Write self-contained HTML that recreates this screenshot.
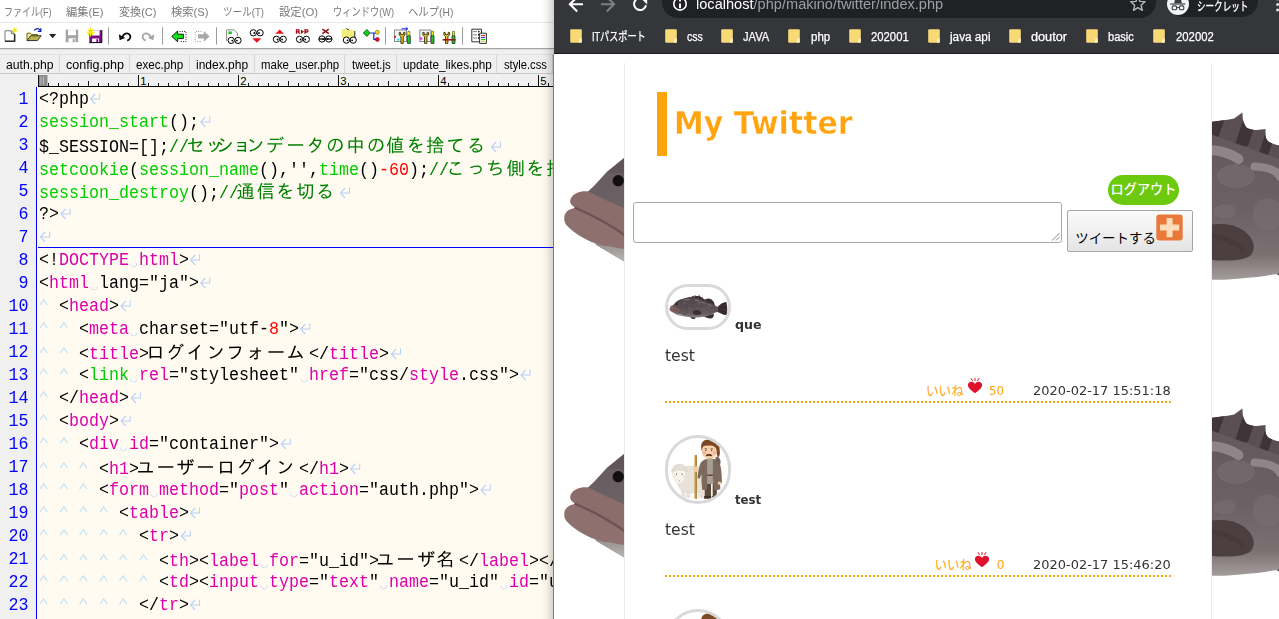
<!DOCTYPE html><html lang="ja"><head><meta charset="utf-8"><title>My Twitter</title><style>*{box-sizing:border-box}
html,body{margin:0;padding:0}
body{width:1279px;height:619px;overflow:hidden;position:relative;background:#fff;font-family:"Liberation Sans","Noto Sans CJK JP",sans-serif}
.abs{position:absolute}
/* ---------- editor ---------- */
#ed{position:absolute;left:0;top:0;width:554px;height:619px;overflow:hidden;background:#fffbf0}
#menu{position:absolute;left:0;top:0;width:554px;height:22px;background:#fff}
#menu span{position:absolute;top:4.1px;font-size:11.6px;line-height:16px;color:#7a7a7a;white-space:nowrap;font-family:"Liberation Sans","Noto Sans CJK JP",sans-serif;transform-origin:0 50%}
#tool{position:absolute;left:0;top:22px;width:554px;height:27px;background:#fff;border-top:1px solid #e6e6e6}
#toolb{position:absolute;left:0;top:48px;width:554px;height:2px;background:linear-gradient(#a4a4a4 0 50%,#dedede 50% 100%)}
#tabs{position:absolute;left:0;top:50px;width:554px;height:24px;background:#f0f0f0}
#tabs .t{position:absolute;top:4px;height:20px;border-right:1px solid #d6d6d6;border-top:1px solid #e2e2e2;border-bottom:1px solid #c9c9c9;background:#efefef}
#tabs span{position:absolute;top:7.3px;font-size:12px;line-height:16px;color:#000;white-space:nowrap;transform-origin:0 50%}
#ruler{position:absolute;left:0;top:74px;width:554px;height:13px;background:#f0f0f0}
#gut{position:absolute;left:0;top:87px;width:36px;height:532px;background:#f0f0f0}
#gutl{position:absolute;left:36px;top:87px;width:1px;height:532px;background:#0000ff}
.ln{position:absolute;left:0;width:30.8px;text-align:right;color:#0000ff;font:18px/23px "Liberation Mono",monospace;height:23px;transform:scaleX(.9257);transform-origin:0 0}
.cl{position:absolute;left:39px;height:23px;white-space:pre;font:18px/23px "Liberation Mono","IPAGothic",monospace;color:#000;transform:scaleX(.9257);transform-origin:0 0}
.cl i{font-style:normal}
.g{color:#00cc00}.c{color:#008000}.r{color:#ff0000}.m{color:#dd00aa}.k{color:#000}
.nl{color:#b4cdf5}
.tb{color:#c0d6f6}
.j{display:inline-block;font-family:"IPAGothic",monospace;font-size:18.5px;text-align:left;text-indent:-2.8px;letter-spacing:0;transform:scaleX(1.08);transform-origin:0 50%}
.nl{display:inline-block;width:12.96px;height:12px;vertical-align:-1px;margin-left:0.4px}
.sp{display:inline-block;width:10.8px;height:12px;vertical-align:-3px}
#shadow{position:absolute;left:541px;top:0;width:13px;height:619px;background:linear-gradient(90deg,rgba(0,0,0,0),rgba(0,0,0,.04) 40%,rgba(0,0,0,.18))}
#edge{position:absolute;left:553px;top:54px;width:1px;height:565px;background:#7d7d7d}
/* ---------- chrome ---------- */
#ch{position:absolute;left:554px;top:0;width:725px;height:619px;overflow:hidden;background:#fff}
#chtop{position:absolute;left:0;top:0;width:725px;height:54.6px;background:#35363a}
#chline{position:absolute;left:0;top:53.3px;width:725px;height:1.3px;background:#1c1d20}
#url{position:absolute;left:108px;top:-14.5px;width:494px;height:32px;border-radius:16px;background:#202124}
#incog{position:absolute;left:612.5px;top:-15px;width:91.5px;height:32px;border-radius:16px;background:#202124}
.bm{position:absolute;top:29px;font-size:12px;line-height:16px;color:#fff;-webkit-text-stroke:.25px #fff;white-space:nowrap;font-family:"Liberation Sans","Noto Sans CJK JP",sans-serif;transform-origin:0 50%}
.fd{position:absolute;top:29px;width:12px;height:14px}
#page{position:absolute;left:0;top:54px;width:725px;height:565px;overflow:hidden;background:#fff}
#cont{position:absolute;left:70px;top:9px;width:588px;height:600px;background:#fff;border-left:1px solid #ececec;border-right:1px solid #ececec}
.pf{font-family:"DejaVu Sans","Noto Sans CJK JP",sans-serif}
.av{border:3px solid #d9d9d9;border-radius:50px;overflow:hidden;background:#fff}
.nm{font-size:12px;line-height:16px;font-weight:bold;color:#333;white-space:nowrap;transform-origin:0 50%}
.tx{font-size:16px;line-height:22px;color:#333;white-space:nowrap;transform-origin:0 50%}
.lk{font-size:12.6px;line-height:18px;color:#ffa30f;white-space:nowrap;font-family:"Liberation Sans","Noto Sans CJK JP",sans-serif}
.ct{font-size:12.4px;line-height:18px;color:#ffa30f;white-space:nowrap;transform-origin:0 50%}
.dt{font-size:12.4px;line-height:18px;color:#333;white-space:nowrap;transform-origin:0 50%}
.dot{left:111px;width:506px;height:2px;background:repeating-linear-gradient(90deg,#ffa30f 0 2px,transparent 2px 4px)}
.tbs{display:inline-block;width:10.8px;height:12px;vertical-align:0.3px}
</style></head><body><svg width="0" height="0" style="position:absolute">
<defs>
<linearGradient id="kb" x1="0" y1="0" x2="0" y2="1">
<stop offset="0" stop-color="#62575a"/><stop offset=".55" stop-color="#6c6164"/><stop offset=".84" stop-color="#7b7173"/><stop offset="1" stop-color="#a59c9d"/>
</linearGradient>
<linearGradient id="kc" x1="0" y1="0" x2="0" y2="1">
<stop offset="0" stop-color="#968d8d"/><stop offset="1" stop-color="#cbc5c5"/>
</linearGradient>
<clipPath id="kfin"><path d="M178 74L190 63C190.5 70 193 72 197 71L205 57C205.5 64 207 67.5 208.3 67.8C216 67 224 66 230 64.6L238.5 58.6C238.5 64 239 67 239.8 68.6C241 72 242.5 74 243.8 74.3C247 76 250 76 252.7 75.9L261.6 75.1C261.3 79 261.4 81 261.6 82.3C262.5 86 264 87.5 265.6 88.3C269 90 272 91 275 91.2L284 90L290 116L178 80Z"/></clipPath>
<symbol id="kue" viewBox="0 0 450 296" preserveAspectRatio="none">
<!-- tail -->
<path d="M360 158C380 140 408 112 436 111C446 135 447 186 440 209C410 207 380 190 360 176Z" fill="#4a3e41"/>
<path d="M395 128L438 118M390 150L442 150M392 172L440 196" stroke="#392e31" stroke-width="5" fill="none"/>
<!-- soft dorsal -->
<path d="M281 93C296 78 326 84 341 108C347 118 350 128 351 137L288 116Z" fill="#4a3e41"/>
<!-- anal fin -->
<path d="M268 217C280 226 300 234 322 233C338 231 345 219 344 200L300 206Z" fill="#4a3e41"/>
<!-- pelvic fin -->
<path d="M166 218C168 230 180 238 200 237C206 232 206 226 204 220Z" fill="#453a3d"/>
<!-- spiny dorsal -->
<g clip-path="url(#kfin)">
<rect x="170" y="50" width="130" height="80" fill="#5a4f52"/>
<path d="M183 50L196 50L182 92L169 92Z M212 50L225.5 50L211.5 92L198 92Z M244.5 50L258 50L244 92L230.5 92Z M271 50L281 50L264 102L254 102Z" fill="#3f3439"/>
</g>
<!-- body -->
<path d="M34 137.5L40.4 131.4L52.5 118.3L70.3 103.7C84 96 96 92 107 89C125 82 150 74 182 72C192 74 200 78 208.3 80.7L275 105C290 110 320 120 347 131C356 138 366 146 376 150L376 185C366 186 358 188 350 190C338 198 310 211 277 219C262 222 252 223.5 241 224C230 225.5 218 226 208 225.7C195 226 180 225 168 223C150 221 135 219 120 216C100 213 85 210.5 70.3 207.6L42.4 191Z" fill="url(#kb)"/>
<!-- blotches -->
<g fill="#7c7274" opacity=".5">
<ellipse cx="232" cy="122" rx="19" ry="12"/><ellipse cx="264" cy="160" rx="15" ry="16"/><ellipse cx="221" cy="157" rx="11" ry="7"/>
<ellipse cx="130" cy="120" rx="20" ry="12"/><ellipse cx="300" cy="150" rx="18" ry="12"/><ellipse cx="160" cy="160" rx="14" ry="10"/>
</g>
<g fill="none" stroke="#8f8587" stroke-linecap="round" stroke-linejoin="round">
<path d="M206 96C216 96.5 226 99 234.5 105" stroke-width="10"/>
<path d="M250.5 112.5C260 113 268 115 272 118L277 124" stroke-width="8"/>
<path d="M120 98C135 94 150 92 160 94" stroke-width="8"/>
<path d="M300 128C312 130 322 136 330 142" stroke-width="7"/>
</g>
<!-- gill line -->
<path d="M128 96C146 120 148 170 126 205" fill="none" stroke="#584d50" stroke-width="4"/>
<!-- pectoral fin -->
<path d="M186 188C186 176 200 169.5 218 170C234 170.5 244 178 248 186C251 192 250 198 246 202C238 206.5 228 206.5 218 206.5C200 207 186 200 186 188Z" fill="#4b3f42"/>
<path d="M194 182C210 180 228 186 240 196" fill="none" stroke="#43373a" stroke-width="5" opacity=".7"/>
<!-- chin -->
<path d="M40.4 189C46 191 52 192 54.5 192L92 196C104 204 112 211 120 216C100 213 85 210.5 70.3 207.6L42.4 191Z" fill="url(#kc)"/>
<!-- head darker top -->
<path d="M52.5 118.3L70.3 103.7C84 96 96 92 107 89L100 120Z" fill="#5c5153" opacity=".55"/>
<!-- lips -->
<path d="M20.2 154.2C16 154.5 12 157 10.5 161.5C9.5 166 11 170 14.1 172.8C18 177 22 179.5 24.2 180.9C30 184.5 36 187.5 40.4 189C46 191 52 192 54.5 192C62 193.5 68 194.5 70.3 195C78 196.5 85 197 90 196C93 194 91 192.5 88 192C80 187.5 74 183 70.3 180.9C58 172 42 162.7 21.2 153.6Z" fill="#8e716f"/>
<path d="M34.3 137.5C27 136.5 20 139 17 144C15 148 16.5 151 21.2 153.6C40 162 58 172 70.3 180.9C78 186 84 190 88 192C93 185 93 172 88 165C78 158 60 149 52.5 146.5Z" fill="#8b6e6c"/>
<path d="M21.5 154C42 162.7 58 172 70.3 180.9C78 186 84 190 88 192" fill="none" stroke="#6b5354" stroke-width="2.4" stroke-linecap="round"/>
<!-- eye -->
<circle cx="64.2" cy="126.7" r="5.6" fill="#120f12"/>
</symbol>
<symbol id="shep" viewBox="0 0 60 64">
<!-- sheep legs -->
<path d="M13.6 52h3.2v8.4h-3.2zM18.6 53h3.2v7.4h-3.2zM30.6 53h3v7.4h-3zM33.9 52h2.6v8.2h-2.6z" fill="#ece6de" stroke="#d9cfc4" stroke-width=".5"/>
<!-- sheep body -->
<path d="M12 33C13 28.5 22 28 29 29.2C35 29.8 37.5 33 37.3 41C37.5 50 34 55.3 26 55.3C17 56 10.5 53 9.5 46Z" fill="#e9e2d9" stroke="#d9cfc4" stroke-width=".6"/>
<!-- sheep head -->
<path d="M4.6 33.4C4.8 30 8 29.2 11 29.6C14.5 29 17.6 30.4 17.8 33.6C18.3 36 17.6 38.4 16.8 40.4C15.8 44 14 46.4 11.2 46.4C8.4 46.4 6.6 44 5.8 40.4C4.8 38.4 4.2 36 4.6 33.4Z" fill="#f8f4ee" stroke="#ddd3c8" stroke-width=".5"/>
<path d="M4.8 32C2.6 32.2 2.4 34.6 4.6 35ZM17.6 32C19.9 32.2 20.1 34.6 17.9 35Z" fill="#efe6da" stroke="#d9cfc4" stroke-width=".5"/>
<path d="M4.6 33.6C4 29 7 26.4 11.2 26.8C15.5 26.2 18.6 29 17.8 33.8C15 31.8 8 31.8 4.6 33.6Z" fill="#e6ded4" stroke="#d5cabd" stroke-width=".5"/>
<circle cx="8.3" cy="36.6" r=".65" fill="#6a6058"/><circle cx="14" cy="36.6" r=".65" fill="#6a6058"/>
<ellipse cx="6.8" cy="39" rx="1.2" ry=".8" fill="#f6cfcf" opacity=".7"/><ellipse cx="15.6" cy="39" rx="1.2" ry=".8" fill="#f6cfcf" opacity=".7"/>
<path d="M10 42L11.2 43.3L12.4 42M11.2 43.3V44.4" fill="none" stroke="#bba99c" stroke-width=".6"/>
<!-- legs -->
<path d="M36.8 45H43.2V59.4H36.8ZM44.8 45H49V59.4H44.8Z" fill="#5c4a3b"/>
<path d="M36.2 58.6H43.4V61.2H36.2ZM44.4 58.6H49.6V61.2H44.4Z" fill="#3f3128"/>
<!-- coat -->
<path d="M39 21.2C35 22 32.6 24 31.6 28C30.6 32 29.8 36 29.6 40.4L31.4 41.4L33.6 36.6C33.4 42 33.6 48 34.4 52.2C36 52.8 37.6 52.6 38.8 52L39.6 44L45.4 44L46.2 52.6C48.6 53 51 52.6 52.6 51.6L52.2 46.6C53.4 46.2 54.2 45.4 54.2 44.2C54 36 53.4 29 51.8 25.4C50.4 22.6 48 21.4 45.6 21.2Z" fill="#7b6a5d"/>
<path d="M47.6 19.4C50 18.2 52.8 20.4 52.8 24L52.2 27.4L47.6 22.4Z" fill="#75645a"/>
<!-- tunic -->
<path d="M39.2 21.6H45V46.4H39.2Z" fill="#aa9e92"/>
<path d="M39.2 36.8H45V38.3H39.2Z" fill="#5a4b40"/>
<path d="M39.6 19.6H44.6V23H39.6Z" fill="#aa9e92"/>
<ellipse cx="51.7" cy="45.5" rx="1.9" ry="1.7" fill="#f6cba3"/>
<!-- head -->
<path d="M33.2 9.6C32.6 4.6 36 1.2 40.4 1.4C42 0.6 45.5 1 47.4 2.4C50.6 4 52.2 8 51.8 12C52.6 15 52 18.6 50 20.2C49.4 17.4 48.8 15.4 48.4 13.6L35.4 10.6L34.4 14.4C33.6 12.8 33.3 11.2 33.2 9.6Z" fill="#7a4a26"/>
<path d="M34.2 10.6C34.2 8 36.4 6.6 40.4 7C44.4 6.4 48.6 7.8 48.8 11.6L48.8 14.8C48.8 18.6 45.8 20.6 41.6 20.6C37.4 20.6 34.2 18.6 34.2 14.8Z" fill="#f8d1aa"/>
<path d="M33.8 11C34.6 8 37.6 7 40.6 7.8C43.6 7 47.6 8 49.2 12C49.6 8 47.6 5 41.6 5.2C36.4 5 33.6 7.4 33.8 11Z" fill="#7a4a26"/>
<ellipse cx="36.2" cy="15.1" rx="1.8" ry="1.4" fill="#f5a39c" opacity=".85"/><ellipse cx="46.8" cy="15.1" rx="1.8" ry="1.4" fill="#f5a39c" opacity=".85"/>
<path d="M36.6 10.9h2.6M42.6 10.9h2.6" stroke="#4a3424" stroke-width=".7" fill="none"/>
<circle cx="37.9" cy="12.5" r=".6" fill="#33261d"/><circle cx="43.8" cy="12.5" r=".6" fill="#33261d"/>
<path d="M37.8 17.4C39 15.8 43 15.8 44.4 17.4C44 18.9 42.2 18.6 41.1 18C40 18.6 38.2 18.9 37.8 17.4Z" fill="#5f3a1f"/>
<!-- staff + hand -->
<path d="M26.4 17.6Q27.7 16.4 29 17.6V61.4H26.4Z" fill="#c39a4d"/>
<path d="M28.4 17.4V61.4" stroke="#a67c33" stroke-width=".7" fill="none"/>
<path d="M25.2 31.2C25.2 29.2 27 28.4 28.6 28.6C30 28.8 30.6 30.4 30.4 32C30.2 33.6 29 34.6 27.6 34.4C26 34.2 25.2 32.8 25.2 31.2Z" fill="#f6cba3"/>
</symbol>
<symbol id="heart" viewBox="0 0 16 16">
<path d="M8 15.2C4.5 12.6 0.9 10.2 0.9 7.1C0.9 5 2.5 3.7 4.3 3.7C5.9 3.7 7.2 4.6 8 6C8.8 4.6 10.1 3.7 11.7 3.7C13.5 3.7 15.1 5 15.1 7.1C15.1 10.2 11.5 12.6 8 15.2Z" fill="#e0112b"/>
<path d="M8 0.2V2.6M4.2 0.6L5.4 2.7M11.8 0.6L10.6 2.7" stroke="#e0112b" stroke-width="1" stroke-linecap="round"/>
</symbol>
</defs>
</svg>
<div id="ed"><div id="menu"><span id="mn0" style="transform:scaleX(0.7763);left:4px">ファイル(F)</span><span id="mn1" style="transform:scaleX(0.9701);left:66px">編集(E)</span><span id="mn2" style="transform:scaleX(0.9543);left:119px">変換(C)</span><span id="mn3" style="transform:scaleX(0.9701);left:171px">検索(S)</span><span id="mn4" style="transform:scaleX(0.8267);left:223px">ツール(T)</span><span id="mn5" style="transform:scaleX(0.9765);left:278.5px">設定(O)</span><span id="mn6" style="transform:scaleX(0.7959);left:333px">ウィンドウ(W)</span><span id="mn7" style="transform:scaleX(0.8941);left:408px">ヘルプ(H)</span></div><div id="tool"><svg class="abs" style="left:0;top:0" width="554" height="26" viewBox="0 23 554 26" shape-rendering="auto">
<g fill="none" stroke-linecap="butt">
<!-- new -->
<path d="M5 30.8H11.3L14.3 33.8V41H5Z" fill="#fff" stroke="#777" stroke-width="1"/>
<path d="M11.3 30.8V33.8H14.3" stroke="#777" stroke-width="1"/>
<path d="M5 41.2H14.8V34" stroke="#000" stroke-width="1.1"/>
<path d="M14.8 27.6V33M12.2 30.3H17.4M13 28.5L16.6 32.1M16.6 28.5L13 32.1" stroke="#f2e600" stroke-width="1"/>
<!-- open -->
<path d="M27 40.5V33.2H30.5L31.5 34.5H37.5V36" fill="#f7f2a0" stroke="#6b6b00" stroke-width="1"/>
<path d="M27 40.6L30.6 35.8H41.2L37.4 40.6Z" fill="#b9b44a" stroke="#333" stroke-width="1"/>
<path d="M34.3 30.6C35.5 28 38.8 27.8 40 30.3M40.8 28.2V31.3H37.8" stroke="#0a1fb0" stroke-width="1.3"/>
<!-- dropdown -->
<path d="M49 34H56.2L52.6 38.2Z" fill="#222" stroke="none"/>
<!-- save gray -->
<path d="M65.7 29.6H78.2V42.2H65.7Z" fill="#a3a3a3" stroke="none"/>
<path d="M68 29.6H76V35.2H68Z M68.5 38.3H75.5V42.2H68.5Z" fill="#fff" stroke="none"/>
<path d="M72.7 39H74.6V42.2H72.7Z" fill="#a3a3a3" stroke="none"/>
<!-- save as purple -->
<path d="M89.3 30.2H101.8V42.4H89.3Z" fill="#7d0a82" stroke="none"/>
<path d="M91.6 30.2H99.6V35.4H91.6Z M92.1 38.5H99.1V42.4H92.1Z" fill="#fff" stroke="none"/>
<path d="M96.3 39.2H98.2V42.4H96.3Z" fill="#7d0a82" stroke="none"/>
<path d="M101.8 30.2V42.6H89.3" stroke="#000" stroke-width="1"/>
<path d="M90.5 27.8V36.5M86.3 32.2H95M87.6 29.2L93.6 35.2M93.6 29.2L87.6 35.2" stroke="#f5e800" stroke-width="1.1"/>
<!-- sep -->
<path d="M108.5 27.2V44.6M162.5 27.2V44.6M216.5 27.2V44.6M385.5 27.2V44.6M462.5 27.2V44.6" stroke="#9d9d9d" stroke-width="1"/>
<!-- undo -->
<path d="M122.5 37.2C123.2 33.6 127.5 32.2 129.6 34.6C131.3 36.6 130.2 39.6 127.2 40.6" stroke="#111" stroke-width="1.9"/>
<path d="M118.8 34.2L119.6 40.2L125.2 38Z" fill="#111" stroke="none"/>
<!-- redo -->
<path d="M150.5 37.2C149.8 33.6 145.5 32.2 143.4 34.6C141.7 36.6 142.8 39.6 145.8 40.6" stroke="#a6a6a6" stroke-width="1.9"/>
<path d="M154.2 34.2L153.4 40.2L147.8 38Z" fill="#a6a6a6" stroke="none"/>
<!-- jump back green -->
<path d="M179.5 31.5H186V41.5H179.5" stroke="#222" stroke-width="1" stroke-dasharray="1 1.3"/>
<path d="M171.8 36.4L177.6 31V34.2H183.4V38.6H177.6V41.8Z" fill="#0fe31a" stroke="#1a1a1a" stroke-width="1" stroke-linejoin="round"/>
<!-- jump fwd gray -->
<path d="M201.5 31.5H195.2V41.5H201.5" stroke="#9a9a9a" stroke-width="1" stroke-dasharray="1 1.3"/>
<path d="M209.6 36.4L203.8 31V34.2H198V38.6H203.8V41.8Z" fill="#a9a9a9" stroke="none"/>
<!-- eyes 1: doc+eyes -->
<path d="M226.6 41V29.8H234L237.4 33.2V36" fill="#fff" stroke="#8a8a8a" stroke-width="1"/>
<rect x="228.4" y="31.4" width="3.4" height="2.6" fill="#14c820" stroke="none"/>
<g id="eyes"><circle cx="231.2" cy="40.4" r="3.15" fill="#fff" stroke="#000" stroke-width="1"/><circle cx="238" cy="40.4" r="3.15" fill="#fff" stroke="#000" stroke-width="1"/><circle cx="232.3" cy="40.6" r=".9" fill="#000" stroke="none"/><circle cx="236.9" cy="40.6" r=".9" fill="#000" stroke="none"/></g>
<!-- eyes 2 -->
<use href="#eyes" x="22.1" y="-7.6"/>
<path d="M252.3 38.3H261.3L256.8 42.8Z" fill="#e6141e" stroke="none"/>
<!-- eyes 3 -->
<path d="M275.4 33.8H284L279.7 29.4Z" fill="#e6141e" stroke="none"/>
<use href="#eyes" x="45.2" y="-1.1"/>
<!-- eyes 4 RP -->
<path d="M296.5 33.8V29.8H298.6Q299.8 30.8 298.6 31.8H296.5M298.2 31.8L299.8 33.8 M305 33.8V29.8H307.2Q308.6 30.9 307.2 32H305" stroke="#a30f14" stroke-width="1.35"/>
<path d="M301 29.6V34L304 31.8Z" fill="#a30f14" stroke="none"/>
<use href="#eyes" x="68.3" y="-1.1"/>
<!-- eyes 5 X -->
<path d="M322.4 29.2L328.8 33.6M328.8 29.2L322.4 33.6" stroke="#8c0f12" stroke-width="1.5"/>
<use href="#eyes" x="90.8" y="-1.4"/>
<path d="M318.8 39H332.3" stroke="#000" stroke-width="1.2"/>
<!-- eyes 6 folder -->
<path d="M341.6 38V29.4L345 28.4L346.4 29.8H351.5L354.6 31V37" fill="#f3ee77" stroke="none"/>
<path d="M346.4 28.6L349 30M354.8 31V38" stroke="#222" stroke-width="1"/>
<use href="#eyes" x="115.2" y="-.3"/>
<!-- outline -->
<path d="M370.4 33H377M373.8 33V39.4H377" stroke="#1020f0" stroke-width="1.2"/>
<path d="M363.3 33L366.8 29.5L370.3 33L366.8 36.5Z" fill="#16c81e" stroke="#0a4d0c" stroke-width=".8"/>
<circle cx="377.3" cy="32.2" r="2" fill="#f2e21a" stroke="#6b6400" stroke-width=".6"/><circle cx="377.3" cy="39.4" r="2" fill="#e6141e" stroke="#6e0a0e" stroke-width=".6"/>
<!-- tools 1 -->
<rect x="394.5" y="30" width="12" height="11.5" fill="#f4f4f4" stroke="#8c8c8c" stroke-width="1"/>
<path d="M401.5 28.8H407.5M405.8 27.4L407.8 28.8L405.8 30.2" stroke="#1428e6" stroke-width="1"/>
<rect x="394.2" y="35.8" width="1.8" height="2" fill="#e6141e" stroke="none"/><rect x="397.2" y="38.6" width="2" height="2" fill="#19dcf0" stroke="none"/>
<g id="wr"><path d="M399.2 32.4V35L400.9 36.6V43.4H403.3V36.6L405 35V32.4H403.6V34.4H400.6V32.4Z" fill="#d6bc1e" stroke="#2a2400" stroke-width=".8"/><path d="M408 31.4H409.8V36H410.4V43.4H407.4V36H408Z" fill="#22c42a" stroke="#1a1a1a" stroke-width=".7"/><path d="M408 31.4H409.8V35H408Z" fill="#f0e61a" stroke="none"/></g>
<!-- tools 2 -->
<rect x="419.8" y="30" width="11" height="11.5" fill="#f4f4f4" stroke="#8c8c8c" stroke-width="1"/>
<rect x="420" y="37.4" width="2.2" height="2.2" fill="#f01ee0" stroke="none"/>
<use href="#wr" x="23.6" y="0"/>
<!-- tools 3 -->
<use href="#wr" x="44.6" y="0"/>
<path d="M442.6 39.8H455.6" stroke="#a01216" stroke-width="1.6"/>
<!-- list -->
<path d="M471.8 29.2H481.5V41.8H471.8Z" fill="#fff" stroke="#333" stroke-width="1"/>
<path d="M473.4 31.6H477M473.4 34.8H477M473.4 38H477" stroke="#333" stroke-width="1" stroke-dasharray="1.2 .8"/>
<path d="M478 30.4L480 31.6L478 32.8ZM478 33.6L480 34.8L478 36ZM478 36.8L480 38L478 39.2Z" fill="#222" stroke="none"/>
<path d="M479.6 33.2H486.4V43.4H479.6Z" fill="#fff" stroke="#333" stroke-width="1"/>
<path d="M481 35.6H485" stroke="#e6141e" stroke-width="1"/><path d="M481 37.6H485" stroke="#1428e6" stroke-width="1"/><path d="M481 39.6H485" stroke="#18b41e" stroke-width="1"/><path d="M481 41.4H485" stroke="#e0c81a" stroke-width="1"/>
</g>
</svg>
</div><div id="toolb"></div><div id="tabs"><div class="t" style="left:0px;width:60.0px"></div><div class="t" style="left:60px;width:70.1px"></div><div class="t" style="left:130px;width:59.900000000000006px"></div><div class="t" style="left:190px;width:64.9px"></div><div class="t" style="left:255px;width:90.10000000000002px"></div><div class="t" style="left:345px;width:51.5px"></div><div class="t" style="left:397px;width:100.19999999999999px"></div><div class="t" style="left:497px;width:56.0px"></div><span id="tb0" style="transform:scaleX(1.0167);left:6px">auth.php</span><span id="tb1" style="transform:scaleX(1.0471);left:65.7px">config.php</span><span id="tb2" style="transform:scaleX(0.9712);left:136.2px">exec.php</span><span id="tb3" style="transform:scaleX(1.0010);left:196.4px">index.php</span><span id="tb4" style="transform:scaleX(0.9529);left:260.5px">make_user.php</span><span id="tb5" style="transform:scaleX(0.9536);left:351.8px">tweet.js</span><span id="tb6" style="transform:scaleX(0.9796);left:403px">update_likes.php</span><span id="tb7" style="transform:scaleX(0.9323);left:503.7px">style.css</span></div><div id="ruler"><svg class="abs" style="left:0;top:0" width="554" height="13" viewBox="0 74 554 13"><rect x="38" y="75" width="9.5" height="11" fill="#8c8c8c"/><path d="M41 76.5v8M43.5 76.5v8" stroke="#b8b8c8" stroke-width="1"/><rect x="38" y="86" width="516" height="1" fill="#000"/><path d="M38.5 75V86M48.5 83V86M58.5 83V86M68.5 83V86M78.5 83V86M88.5 81V86M98.5 83V86M108.5 83V86M118.5 83V86M128.5 83V86M138.5 75V86M148.5 83V86M158.5 83V86M168.5 83V86M178.5 83V86M188.5 81V86M198.5 83V86M208.5 83V86M218.5 83V86M228.5 83V86M238.5 75V86M248.5 83V86M258.5 83V86M268.5 83V86M278.5 83V86M288.5 81V86M298.5 83V86M308.5 83V86M318.5 83V86M328.5 83V86M338.5 75V86M348.5 83V86M358.5 83V86M368.5 83V86M378.5 83V86M388.5 81V86M398.5 83V86M408.5 83V86M418.5 83V86M428.5 83V86M438.5 75V86M448.5 83V86M458.5 83V86M468.5 83V86M478.5 83V86M488.5 81V86M498.5 83V86M508.5 83V86M518.5 83V86M528.5 83V86M538.5 75V86M548.5 83V86M558.5 83V86" stroke="#111" stroke-width="1" fill="none"/><text x="140.2" y="84.6" font-family="Liberation Sans,sans-serif" font-size="11.3" fill="#000">1</text><text x="240.2" y="84.6" font-family="Liberation Sans,sans-serif" font-size="11.3" fill="#000">2</text><text x="340.2" y="84.6" font-family="Liberation Sans,sans-serif" font-size="11.3" fill="#000">3</text><text x="440.2" y="84.6" font-family="Liberation Sans,sans-serif" font-size="11.3" fill="#000">4</text><text x="540.2" y="84.6" font-family="Liberation Sans,sans-serif" font-size="11.3" fill="#000">5</text></svg></div><div id="gut"></div><div id="gutl"></div><div class="ln" style="top:88px">1</div><div class="cl" style="top:88px"><i class="k">&lt;?php</i><svg class="nl" viewBox="0 0 12 12"><path d="M11 0.5V6H1.2M6.2 1L1.2 6L6.2 11" fill="none" stroke="#b5d0fb" stroke-width="1.1"/></svg></div><div class="ln" style="top:111px">2</div><div class="cl" style="top:111px"><i class="g">session_start</i><i class="k">();</i><svg class="nl" viewBox="0 0 12 12"><path d="M11 0.5V6H1.2M6.2 1L1.2 6L6.2 11" fill="none" stroke="#b5d0fb" stroke-width="1.1"/></svg></div><div class="ln" style="top:134px">3</div><div class="cl" style="top:134px"><i class="k">$_SESSION=[];</i><i class="c">//<i class="j" style="width:21.61px">セ</i><i class="j" style="text-indent:-4.2px;width:10.80px">ッ</i><i class="j" style="width:21.61px">シ</i><i class="j" style="text-indent:-6.4px;width:10.80px">ョ</i><i class="j" style="width:21.61px">ン</i><i class="j" style="width:21.61px">デ</i><i class="j" style="width:21.61px">ー</i><i class="j" style="width:21.61px">タ</i><i class="j" style="width:21.61px">の</i><i class="j" style="width:21.61px">中</i><i class="j" style="width:21.61px">の</i><i class="j" style="width:21.61px">値</i><i class="j" style="width:21.61px">を</i><i class="j" style="width:21.61px">捨</i><i class="j" style="width:21.61px">て</i><i class="j" style="width:21.61px">る</i></i><svg class="nl" viewBox="0 0 12 12"><path d="M11 0.5V6H1.2M6.2 1L1.2 6L6.2 11" fill="none" stroke="#b5d0fb" stroke-width="1.1"/></svg></div><div class="ln" style="top:157px">4</div><div class="cl" style="top:157px"><i class="g">setcookie</i><i class="k">(</i><i class="g">session_name</i><i class="k">(),&#x27;&#x27;,</i><i class="g">time</i><i class="k">()</i><i class="r">-60</i><i class="k">);</i><i class="c">//<i class="j" style="width:21.61px">こ</i><i class="j" style="text-indent:-2.5px;width:21.61px">っ</i><i class="j" style="width:21.61px">ち</i><i class="j" style="width:21.61px">側</i><i class="j" style="width:21.61px">を</i><i class="j" style="width:21.61px">捨</i><i class="j" style="width:21.61px">て</i><i class="j" style="width:21.61px">る</i></i></div><div class="ln" style="top:180px">5</div><div class="cl" style="top:180px"><i class="g">session_destroy</i><i class="k">();</i><i class="c">//<i class="j" style="width:21.61px">通</i><i class="j" style="width:21.61px">信</i><i class="j" style="width:21.61px">を</i><i class="j" style="width:21.61px">切</i><i class="j" style="width:21.61px">る</i></i><svg class="nl" viewBox="0 0 12 12"><path d="M11 0.5V6H1.2M6.2 1L1.2 6L6.2 11" fill="none" stroke="#b5d0fb" stroke-width="1.1"/></svg></div><div class="ln" style="top:203px">6</div><div class="cl" style="top:203px"><i class="k">?&gt;</i><svg class="nl" viewBox="0 0 12 12"><path d="M11 0.5V6H1.2M6.2 1L1.2 6L6.2 11" fill="none" stroke="#b5d0fb" stroke-width="1.1"/></svg></div><div class="ln" style="top:226px">7</div><div class="cl" style="top:226px"><svg class="nl" viewBox="0 0 12 12"><path d="M11 0.5V6H1.2M6.2 1L1.2 6L6.2 11" fill="none" stroke="#b5d0fb" stroke-width="1.1"/></svg></div><div class="ln" style="top:249px">8</div><div class="cl" style="top:249px"><i class="k">&lt;!</i><i class="m">DOCTYPE</i><svg class="sp" viewBox="0 0 10.8 12"><path d="M2 7.5Q2 11 5.4 11Q8.8 11 8.8 7.5" fill="none" stroke="#cfe0f8" stroke-width="1"/></svg><i class="m">html</i><i class="k">&gt;</i><svg class="nl" viewBox="0 0 12 12"><path d="M11 0.5V6H1.2M6.2 1L1.2 6L6.2 11" fill="none" stroke="#b5d0fb" stroke-width="1.1"/></svg></div><div class="ln" style="top:272px">9</div><div class="cl" style="top:272px"><i class="k">&lt;</i><i class="m">html</i><i class="k"><svg class="sp" viewBox="0 0 10.8 12"><path d="M2 7.5Q2 11 5.4 11Q8.8 11 8.8 7.5" fill="none" stroke="#cfe0f8" stroke-width="1"/></svg>lang=&quot;ja&quot;&gt;</i><svg class="nl" viewBox="0 0 12 12"><path d="M11 0.5V6H1.2M6.2 1L1.2 6L6.2 11" fill="none" stroke="#b5d0fb" stroke-width="1.1"/></svg></div><div class="ln" style="top:295px">10</div><div class="cl" style="top:295px"><svg class="tbs" viewBox="0 0 10.8 12"><path d="M0.9 6.1L4.9 0.8L8.9 6.1" fill="none" stroke="#bfe2f5" stroke-width="1.15"/></svg> <i class="k">&lt;</i><i class="m">head</i><i class="k">&gt;</i><svg class="nl" viewBox="0 0 12 12"><path d="M11 0.5V6H1.2M6.2 1L1.2 6L6.2 11" fill="none" stroke="#b5d0fb" stroke-width="1.1"/></svg></div><div class="ln" style="top:318px">11</div><div class="cl" style="top:318px"><svg class="tbs" viewBox="0 0 10.8 12"><path d="M0.9 6.1L4.9 0.8L8.9 6.1" fill="none" stroke="#bfe2f5" stroke-width="1.15"/></svg> <svg class="tbs" viewBox="0 0 10.8 12"><path d="M0.9 6.1L4.9 0.8L8.9 6.1" fill="none" stroke="#bfe2f5" stroke-width="1.15"/></svg> <i class="k">&lt;</i><i class="m">meta</i><i class="k"><svg class="sp" viewBox="0 0 10.8 12"><path d="M2 7.5Q2 11 5.4 11Q8.8 11 8.8 7.5" fill="none" stroke="#cfe0f8" stroke-width="1"/></svg>charset=&quot;utf-</i><i class="r">8</i><i class="k">&quot;&gt;</i><svg class="nl" viewBox="0 0 12 12"><path d="M11 0.5V6H1.2M6.2 1L1.2 6L6.2 11" fill="none" stroke="#b5d0fb" stroke-width="1.1"/></svg></div><div class="ln" style="top:341px">12</div><div class="cl" style="top:341px"><svg class="tbs" viewBox="0 0 10.8 12"><path d="M0.9 6.1L4.9 0.8L8.9 6.1" fill="none" stroke="#bfe2f5" stroke-width="1.15"/></svg> <svg class="tbs" viewBox="0 0 10.8 12"><path d="M0.9 6.1L4.9 0.8L8.9 6.1" fill="none" stroke="#bfe2f5" stroke-width="1.15"/></svg> <i class="k">&lt;</i><i class="m">title</i><i class="k">&gt;</i><i class="k"><i class="j" style="width:21.61px">ロ</i><i class="j" style="width:21.61px">グ</i><i class="j" style="width:21.61px">イ</i><i class="j" style="width:21.61px">ン</i><i class="j" style="width:21.61px">フ</i><i class="j" style="width:21.61px">ォ</i><i class="j" style="width:21.61px">ー</i><i class="j" style="width:21.61px">ム</i></i><i class="k">&lt;/</i><i class="m">title</i><i class="k">&gt;</i><svg class="nl" viewBox="0 0 12 12"><path d="M11 0.5V6H1.2M6.2 1L1.2 6L6.2 11" fill="none" stroke="#b5d0fb" stroke-width="1.1"/></svg></div><div class="ln" style="top:364px">13</div><div class="cl" style="top:364px"><svg class="tbs" viewBox="0 0 10.8 12"><path d="M0.9 6.1L4.9 0.8L8.9 6.1" fill="none" stroke="#bfe2f5" stroke-width="1.15"/></svg> <svg class="tbs" viewBox="0 0 10.8 12"><path d="M0.9 6.1L4.9 0.8L8.9 6.1" fill="none" stroke="#bfe2f5" stroke-width="1.15"/></svg> <i class="k">&lt;</i><i class="g">link</i><svg class="sp" viewBox="0 0 10.8 12"><path d="M2 7.5Q2 11 5.4 11Q8.8 11 8.8 7.5" fill="none" stroke="#cfe0f8" stroke-width="1"/></svg><i class="m">rel</i><i class="k">=&quot;stylesheet&quot;<svg class="sp" viewBox="0 0 10.8 12"><path d="M2 7.5Q2 11 5.4 11Q8.8 11 8.8 7.5" fill="none" stroke="#cfe0f8" stroke-width="1"/></svg></i><i class="m">href</i><i class="k">=&quot;css/</i><i class="m">style</i><i class="k">.css&quot;&gt;</i><svg class="nl" viewBox="0 0 12 12"><path d="M11 0.5V6H1.2M6.2 1L1.2 6L6.2 11" fill="none" stroke="#b5d0fb" stroke-width="1.1"/></svg></div><div class="ln" style="top:387px">14</div><div class="cl" style="top:387px"><svg class="tbs" viewBox="0 0 10.8 12"><path d="M0.9 6.1L4.9 0.8L8.9 6.1" fill="none" stroke="#bfe2f5" stroke-width="1.15"/></svg> <i class="k">&lt;/</i><i class="m">head</i><i class="k">&gt;</i><svg class="nl" viewBox="0 0 12 12"><path d="M11 0.5V6H1.2M6.2 1L1.2 6L6.2 11" fill="none" stroke="#b5d0fb" stroke-width="1.1"/></svg></div><div class="ln" style="top:410px">15</div><div class="cl" style="top:410px"><svg class="tbs" viewBox="0 0 10.8 12"><path d="M0.9 6.1L4.9 0.8L8.9 6.1" fill="none" stroke="#bfe2f5" stroke-width="1.15"/></svg> <i class="k">&lt;</i><i class="m">body</i><i class="k">&gt;</i><svg class="nl" viewBox="0 0 12 12"><path d="M11 0.5V6H1.2M6.2 1L1.2 6L6.2 11" fill="none" stroke="#b5d0fb" stroke-width="1.1"/></svg></div><div class="ln" style="top:433px">16</div><div class="cl" style="top:433px"><svg class="tbs" viewBox="0 0 10.8 12"><path d="M0.9 6.1L4.9 0.8L8.9 6.1" fill="none" stroke="#bfe2f5" stroke-width="1.15"/></svg> <svg class="tbs" viewBox="0 0 10.8 12"><path d="M0.9 6.1L4.9 0.8L8.9 6.1" fill="none" stroke="#bfe2f5" stroke-width="1.15"/></svg> <i class="k">&lt;</i><i class="m">div</i><svg class="sp" viewBox="0 0 10.8 12"><path d="M2 7.5Q2 11 5.4 11Q8.8 11 8.8 7.5" fill="none" stroke="#cfe0f8" stroke-width="1"/></svg><i class="m">id</i><i class="k">=&quot;container&quot;&gt;</i><svg class="nl" viewBox="0 0 12 12"><path d="M11 0.5V6H1.2M6.2 1L1.2 6L6.2 11" fill="none" stroke="#b5d0fb" stroke-width="1.1"/></svg></div><div class="ln" style="top:456px">17</div><div class="cl" style="top:456px"><svg class="tbs" viewBox="0 0 10.8 12"><path d="M0.9 6.1L4.9 0.8L8.9 6.1" fill="none" stroke="#bfe2f5" stroke-width="1.15"/></svg> <svg class="tbs" viewBox="0 0 10.8 12"><path d="M0.9 6.1L4.9 0.8L8.9 6.1" fill="none" stroke="#bfe2f5" stroke-width="1.15"/></svg> <svg class="tbs" viewBox="0 0 10.8 12"><path d="M0.9 6.1L4.9 0.8L8.9 6.1" fill="none" stroke="#bfe2f5" stroke-width="1.15"/></svg> <i class="k">&lt;</i><i class="m">h1</i><i class="k">&gt;</i><i class="k"><i class="j" style="width:21.61px">ユ</i><i class="j" style="width:21.61px">ー</i><i class="j" style="width:21.61px">ザ</i><i class="j" style="width:21.61px">ー</i><i class="j" style="width:21.61px">ロ</i><i class="j" style="width:21.61px">グ</i><i class="j" style="width:21.61px">イ</i><i class="j" style="width:21.61px">ン</i></i><i class="k">&lt;/</i><i class="m">h1</i><i class="k">&gt;</i><svg class="nl" viewBox="0 0 12 12"><path d="M11 0.5V6H1.2M6.2 1L1.2 6L6.2 11" fill="none" stroke="#b5d0fb" stroke-width="1.1"/></svg></div><div class="ln" style="top:479px">18</div><div class="cl" style="top:479px"><svg class="tbs" viewBox="0 0 10.8 12"><path d="M0.9 6.1L4.9 0.8L8.9 6.1" fill="none" stroke="#bfe2f5" stroke-width="1.15"/></svg> <svg class="tbs" viewBox="0 0 10.8 12"><path d="M0.9 6.1L4.9 0.8L8.9 6.1" fill="none" stroke="#bfe2f5" stroke-width="1.15"/></svg> <svg class="tbs" viewBox="0 0 10.8 12"><path d="M0.9 6.1L4.9 0.8L8.9 6.1" fill="none" stroke="#bfe2f5" stroke-width="1.15"/></svg> <i class="k">&lt;</i><i class="m">form</i><svg class="sp" viewBox="0 0 10.8 12"><path d="M2 7.5Q2 11 5.4 11Q8.8 11 8.8 7.5" fill="none" stroke="#cfe0f8" stroke-width="1"/></svg><i class="m">method</i><i class="k">=&quot;</i><i class="m">post</i><i class="k">&quot;<svg class="sp" viewBox="0 0 10.8 12"><path d="M2 7.5Q2 11 5.4 11Q8.8 11 8.8 7.5" fill="none" stroke="#cfe0f8" stroke-width="1"/></svg></i><i class="m">action</i><i class="k">=&quot;auth.php&quot;&gt;</i><svg class="nl" viewBox="0 0 12 12"><path d="M11 0.5V6H1.2M6.2 1L1.2 6L6.2 11" fill="none" stroke="#b5d0fb" stroke-width="1.1"/></svg></div><div class="ln" style="top:502px">19</div><div class="cl" style="top:502px"><svg class="tbs" viewBox="0 0 10.8 12"><path d="M0.9 6.1L4.9 0.8L8.9 6.1" fill="none" stroke="#bfe2f5" stroke-width="1.15"/></svg> <svg class="tbs" viewBox="0 0 10.8 12"><path d="M0.9 6.1L4.9 0.8L8.9 6.1" fill="none" stroke="#bfe2f5" stroke-width="1.15"/></svg> <svg class="tbs" viewBox="0 0 10.8 12"><path d="M0.9 6.1L4.9 0.8L8.9 6.1" fill="none" stroke="#bfe2f5" stroke-width="1.15"/></svg> <svg class="tbs" viewBox="0 0 10.8 12"><path d="M0.9 6.1L4.9 0.8L8.9 6.1" fill="none" stroke="#bfe2f5" stroke-width="1.15"/></svg> <i class="k">&lt;</i><i class="m">table</i><i class="k">&gt;</i><svg class="nl" viewBox="0 0 12 12"><path d="M11 0.5V6H1.2M6.2 1L1.2 6L6.2 11" fill="none" stroke="#b5d0fb" stroke-width="1.1"/></svg></div><div class="ln" style="top:525px">20</div><div class="cl" style="top:525px"><svg class="tbs" viewBox="0 0 10.8 12"><path d="M0.9 6.1L4.9 0.8L8.9 6.1" fill="none" stroke="#bfe2f5" stroke-width="1.15"/></svg> <svg class="tbs" viewBox="0 0 10.8 12"><path d="M0.9 6.1L4.9 0.8L8.9 6.1" fill="none" stroke="#bfe2f5" stroke-width="1.15"/></svg> <svg class="tbs" viewBox="0 0 10.8 12"><path d="M0.9 6.1L4.9 0.8L8.9 6.1" fill="none" stroke="#bfe2f5" stroke-width="1.15"/></svg> <svg class="tbs" viewBox="0 0 10.8 12"><path d="M0.9 6.1L4.9 0.8L8.9 6.1" fill="none" stroke="#bfe2f5" stroke-width="1.15"/></svg> <svg class="tbs" viewBox="0 0 10.8 12"><path d="M0.9 6.1L4.9 0.8L8.9 6.1" fill="none" stroke="#bfe2f5" stroke-width="1.15"/></svg> <i class="k">&lt;</i><i class="m">tr</i><i class="k">&gt;</i><svg class="nl" viewBox="0 0 12 12"><path d="M11 0.5V6H1.2M6.2 1L1.2 6L6.2 11" fill="none" stroke="#b5d0fb" stroke-width="1.1"/></svg></div><div class="ln" style="top:548px">21</div><div class="cl" style="top:548px"><svg class="tbs" viewBox="0 0 10.8 12"><path d="M0.9 6.1L4.9 0.8L8.9 6.1" fill="none" stroke="#bfe2f5" stroke-width="1.15"/></svg> <svg class="tbs" viewBox="0 0 10.8 12"><path d="M0.9 6.1L4.9 0.8L8.9 6.1" fill="none" stroke="#bfe2f5" stroke-width="1.15"/></svg> <svg class="tbs" viewBox="0 0 10.8 12"><path d="M0.9 6.1L4.9 0.8L8.9 6.1" fill="none" stroke="#bfe2f5" stroke-width="1.15"/></svg> <svg class="tbs" viewBox="0 0 10.8 12"><path d="M0.9 6.1L4.9 0.8L8.9 6.1" fill="none" stroke="#bfe2f5" stroke-width="1.15"/></svg> <svg class="tbs" viewBox="0 0 10.8 12"><path d="M0.9 6.1L4.9 0.8L8.9 6.1" fill="none" stroke="#bfe2f5" stroke-width="1.15"/></svg> <svg class="tbs" viewBox="0 0 10.8 12"><path d="M0.9 6.1L4.9 0.8L8.9 6.1" fill="none" stroke="#bfe2f5" stroke-width="1.15"/></svg> <i class="k">&lt;</i><i class="m">th</i><i class="k">&gt;&lt;</i><i class="m">label</i><svg class="sp" viewBox="0 0 10.8 12"><path d="M2 7.5Q2 11 5.4 11Q8.8 11 8.8 7.5" fill="none" stroke="#cfe0f8" stroke-width="1"/></svg><i class="m">for</i><i class="k">=&quot;u_id&quot;&gt;</i><i class="k"><i class="j" style="width:21.61px">ユ</i><i class="j" style="width:21.61px">ー</i><i class="j" style="width:21.61px">ザ</i><i class="j" style="width:21.61px">名</i></i><i class="k">&lt;/</i><i class="m">label</i><i class="k">&gt;&lt;/</i><i class="m">th</i><i class="k">&gt;</i></div><div class="ln" style="top:571px">22</div><div class="cl" style="top:571px"><svg class="tbs" viewBox="0 0 10.8 12"><path d="M0.9 6.1L4.9 0.8L8.9 6.1" fill="none" stroke="#bfe2f5" stroke-width="1.15"/></svg> <svg class="tbs" viewBox="0 0 10.8 12"><path d="M0.9 6.1L4.9 0.8L8.9 6.1" fill="none" stroke="#bfe2f5" stroke-width="1.15"/></svg> <svg class="tbs" viewBox="0 0 10.8 12"><path d="M0.9 6.1L4.9 0.8L8.9 6.1" fill="none" stroke="#bfe2f5" stroke-width="1.15"/></svg> <svg class="tbs" viewBox="0 0 10.8 12"><path d="M0.9 6.1L4.9 0.8L8.9 6.1" fill="none" stroke="#bfe2f5" stroke-width="1.15"/></svg> <svg class="tbs" viewBox="0 0 10.8 12"><path d="M0.9 6.1L4.9 0.8L8.9 6.1" fill="none" stroke="#bfe2f5" stroke-width="1.15"/></svg> <svg class="tbs" viewBox="0 0 10.8 12"><path d="M0.9 6.1L4.9 0.8L8.9 6.1" fill="none" stroke="#bfe2f5" stroke-width="1.15"/></svg> <i class="k">&lt;</i><i class="m">td</i><i class="k">&gt;&lt;</i><i class="m">input</i><svg class="sp" viewBox="0 0 10.8 12"><path d="M2 7.5Q2 11 5.4 11Q8.8 11 8.8 7.5" fill="none" stroke="#cfe0f8" stroke-width="1"/></svg><i class="m">type</i><i class="k">=&quot;</i><i class="m">text</i><i class="k">&quot;<svg class="sp" viewBox="0 0 10.8 12"><path d="M2 7.5Q2 11 5.4 11Q8.8 11 8.8 7.5" fill="none" stroke="#cfe0f8" stroke-width="1"/></svg></i><i class="m">name</i><i class="k">=&quot;u_id&quot;<svg class="sp" viewBox="0 0 10.8 12"><path d="M2 7.5Q2 11 5.4 11Q8.8 11 8.8 7.5" fill="none" stroke="#cfe0f8" stroke-width="1"/></svg></i><i class="m">id</i><i class="k">=&quot;u_id&quot;&gt;&lt;/</i><i class="m">td</i><i class="k">&gt;</i></div><div class="ln" style="top:594px">23</div><div class="cl" style="top:594px"><svg class="tbs" viewBox="0 0 10.8 12"><path d="M0.9 6.1L4.9 0.8L8.9 6.1" fill="none" stroke="#bfe2f5" stroke-width="1.15"/></svg> <svg class="tbs" viewBox="0 0 10.8 12"><path d="M0.9 6.1L4.9 0.8L8.9 6.1" fill="none" stroke="#bfe2f5" stroke-width="1.15"/></svg> <svg class="tbs" viewBox="0 0 10.8 12"><path d="M0.9 6.1L4.9 0.8L8.9 6.1" fill="none" stroke="#bfe2f5" stroke-width="1.15"/></svg> <svg class="tbs" viewBox="0 0 10.8 12"><path d="M0.9 6.1L4.9 0.8L8.9 6.1" fill="none" stroke="#bfe2f5" stroke-width="1.15"/></svg> <svg class="tbs" viewBox="0 0 10.8 12"><path d="M0.9 6.1L4.9 0.8L8.9 6.1" fill="none" stroke="#bfe2f5" stroke-width="1.15"/></svg> <i class="k">&lt;/</i><i class="m">tr</i><i class="k">&gt;</i><svg class="nl" viewBox="0 0 12 12"><path d="M11 0.5V6H1.2M6.2 1L1.2 6L6.2 11" fill="none" stroke="#b5d0fb" stroke-width="1.1"/></svg></div><div class="ln" style="top:617px">24</div><div class="cl" style="top:617px"><svg class="tbs" viewBox="0 0 10.8 12"><path d="M0.9 6.1L4.9 0.8L8.9 6.1" fill="none" stroke="#bfe2f5" stroke-width="1.15"/></svg> <svg class="tbs" viewBox="0 0 10.8 12"><path d="M0.9 6.1L4.9 0.8L8.9 6.1" fill="none" stroke="#bfe2f5" stroke-width="1.15"/></svg> <svg class="tbs" viewBox="0 0 10.8 12"><path d="M0.9 6.1L4.9 0.8L8.9 6.1" fill="none" stroke="#bfe2f5" stroke-width="1.15"/></svg> <svg class="tbs" viewBox="0 0 10.8 12"><path d="M0.9 6.1L4.9 0.8L8.9 6.1" fill="none" stroke="#bfe2f5" stroke-width="1.15"/></svg> <svg class="tbs" viewBox="0 0 10.8 12"><path d="M0.9 6.1L4.9 0.8L8.9 6.1" fill="none" stroke="#bfe2f5" stroke-width="1.15"/></svg> <i class="k">&lt;</i><i class="m">tr</i><i class="k">&gt;</i><svg class="nl" viewBox="0 0 12 12"><path d="M11 0.5V6H1.2M6.2 1L1.2 6L6.2 11" fill="none" stroke="#b5d0fb" stroke-width="1.1"/></svg></div><div class="abs" style="left:38px;top:247px;width:516px;height:1px;background:#0000ff"></div><div id="shadow"></div><div id="edge"></div></div><div id="ch"><div id="chtop"><div id="url"></div><div id="incog"></div><svg class="abs" style="left:0;top:0" width="725" height="24" viewBox="554 0 725 24">
<g fill="none" stroke-linecap="butt" stroke-linejoin="miter">
<path d="M583 4.2H570.6M577.2 -3L569.9 4.2L577.2 11.4" stroke="#fff" stroke-width="2.1"/>
<path d="M601 4.2H613.4M606.8 -3L614.1 4.2L606.8 11.4" stroke="#7f8083" stroke-width="2.1"/>
<path d="M646 5.2A6 6 0 1 1 644.4 -0.2" stroke="#fff" stroke-width="2"/>
<path d="M641.2 -1.5H647.2V4.6Z" fill="#fff" stroke="none"/>
<circle cx="680" cy="3.9" r="6.2" stroke="#fff" stroke-width="1.6"/>
<path d="M680 3.4V8.2M680 -0.6V1.6" stroke="#fff" stroke-width="2"/>
<path d="M1137.9 -3.6L1139.9 1.4L1145 1.8L1141.1 5.2L1142.3 10.3L1137.9 7.6L1133.5 10.3L1134.7 5.2L1130.8 1.8L1135.9 1.4Z" stroke="#b4b7bb" stroke-width="1.4" stroke-linejoin="round"/>
<circle cx="1178" cy="3.9" r="11" fill="#f3f4f5" stroke="none"/>
<path d="M1174.2 3.2L1175.4 -3H1180.6L1181.8 3.2Z" fill="#3c3d41" stroke="none"/>
<path d="M1170.3 4H1185.3" stroke="#3c3d41" stroke-width="1.2"/>
<rect x="1172.2" y="5.9" width="4.4" height="3.8" rx="1.3" stroke="#3c3d41" stroke-width="1.1"/><rect x="1179.4" y="5.9" width="4.4" height="3.8" rx="1.3" stroke="#3c3d41" stroke-width="1.1"/>
<path d="M1176.6 7.4H1179.4" stroke="#3c3d41" stroke-width="1"/>
<circle cx="1277.6" cy="4.4" r="1.5" fill="#dfe1e5" stroke="none"/><circle cx="1277.6" cy="9.9" r="1.5" fill="#dfe1e5" stroke="none"/><circle cx="1277.6" cy="-1.1" r="1.5" fill="#dfe1e5" stroke="none"/>
</g>
</svg>
<span class="abs" id="urlt" style="transform:scaleX(1.0414);left:142.3px;top:-5px;font-size:14px;line-height:18px;color:#9aa0a6;white-space:nowrap;transform-origin:0 50%"><span style="color:#fff">localhost</span>/php/makino/twitter/index.php</span><span class="abs" id="inc" style="transform:scaleX(0.7123);left:643.4px;top:-1.5px;font-size:12px;line-height:16px;color:#fff;-webkit-text-stroke:.35px #fff;white-space:nowrap;transform-origin:0 50%;font-family:'Liberation Sans','Noto Sans CJK JP',sans-serif">シークレット</span><svg class="fd" style="left:15.8px" viewBox="0 0 12 14"><path d="M1.2 0.2H10.8Q11.8 0.2 11.8 1.2V12.8Q11.8 13.8 10.8 13.8H1.2Q0.2 13.8 0.2 12.8V1.2Q0.2 0.2 1.2 0.2Z" fill="#f9d976"/><path d="M9 13.8V10.3Q9 9.5 9.8 9.5H11.8V12.8Q11.8 13.8 10.8 13.8Z" fill="#fdf0c0"/></svg><span class="bm" id="bm0" style="transform:scaleX(0.7598);left:38.3px">ITパスポート</span><svg class="fd" style="left:110.5px" viewBox="0 0 12 14"><path d="M1.2 0.2H10.8Q11.8 0.2 11.8 1.2V12.8Q11.8 13.8 10.8 13.8H1.2Q0.2 13.8 0.2 12.8V1.2Q0.2 0.2 1.2 0.2Z" fill="#f9d976"/><path d="M9 13.8V10.3Q9 9.5 9.8 9.5H11.8V12.8Q11.8 13.8 10.8 13.8Z" fill="#fdf0c0"/></svg><span class="bm" id="bm1" style="transform:scaleX(0.8833);left:133.0px">css</span><svg class="fd" style="left:166.8px" viewBox="0 0 12 14"><path d="M1.2 0.2H10.8Q11.8 0.2 11.8 1.2V12.8Q11.8 13.8 10.8 13.8H1.2Q0.2 13.8 0.2 12.8V1.2Q0.2 0.2 1.2 0.2Z" fill="#f9d976"/><path d="M9 13.8V10.3Q9 9.5 9.8 9.5H11.8V12.8Q11.8 13.8 10.8 13.8Z" fill="#fdf0c0"/></svg><span class="bm" id="bm2" style="transform:scaleX(0.9279);left:189.4px">JAVA</span><svg class="fd" style="left:233.8px" viewBox="0 0 12 14"><path d="M1.2 0.2H10.8Q11.8 0.2 11.8 1.2V12.8Q11.8 13.8 10.8 13.8H1.2Q0.2 13.8 0.2 12.8V1.2Q0.2 0.2 1.2 0.2Z" fill="#f9d976"/><path d="M9 13.8V10.3Q9 9.5 9.8 9.5H11.8V12.8Q11.8 13.8 10.8 13.8Z" fill="#fdf0c0"/></svg><span class="bm" id="bm3" style="transform:scaleX(0.9585);left:256.6px">php</span><svg class="fd" style="left:294.9px" viewBox="0 0 12 14"><path d="M1.2 0.2H10.8Q11.8 0.2 11.8 1.2V12.8Q11.8 13.8 10.8 13.8H1.2Q0.2 13.8 0.2 12.8V1.2Q0.2 0.2 1.2 0.2Z" fill="#f9d976"/><path d="M9 13.8V10.3Q9 9.5 9.8 9.5H11.8V12.8Q11.8 13.8 10.8 13.8Z" fill="#fdf0c0"/></svg><span class="bm" id="bm4" style="transform:scaleX(0.9414);left:317.2px">202001</span><svg class="fd" style="left:373.7px" viewBox="0 0 12 14"><path d="M1.2 0.2H10.8Q11.8 0.2 11.8 1.2V12.8Q11.8 13.8 10.8 13.8H1.2Q0.2 13.8 0.2 12.8V1.2Q0.2 0.2 1.2 0.2Z" fill="#f9d976"/><path d="M9 13.8V10.3Q9 9.5 9.8 9.5H11.8V12.8Q11.8 13.8 10.8 13.8Z" fill="#fdf0c0"/></svg><span class="bm" id="bm5" style="transform:scaleX(0.9789);left:396.0px">java api</span><svg class="fd" style="left:454.7px" viewBox="0 0 12 14"><path d="M1.2 0.2H10.8Q11.8 0.2 11.8 1.2V12.8Q11.8 13.8 10.8 13.8H1.2Q0.2 13.8 0.2 12.8V1.2Q0.2 0.2 1.2 0.2Z" fill="#f9d976"/><path d="M9 13.8V10.3Q9 9.5 9.8 9.5H11.8V12.8Q11.8 13.8 10.8 13.8Z" fill="#fdf0c0"/></svg><span class="bm" id="bm6" style="transform:scaleX(1.0579);left:477.0px">doutor</span><svg class="fd" style="left:531.5px" viewBox="0 0 12 14"><path d="M1.2 0.2H10.8Q11.8 0.2 11.8 1.2V12.8Q11.8 13.8 10.8 13.8H1.2Q0.2 13.8 0.2 12.8V1.2Q0.2 0.2 1.2 0.2Z" fill="#f9d976"/><path d="M9 13.8V10.3Q9 9.5 9.8 9.5H11.8V12.8Q11.8 13.8 10.8 13.8Z" fill="#fdf0c0"/></svg><span class="bm" id="bm7" style="transform:scaleX(0.9209);left:554.4px">basic</span><svg class="fd" style="left:598.7px" viewBox="0 0 12 14"><path d="M1.2 0.2H10.8Q11.8 0.2 11.8 1.2V12.8Q11.8 13.8 10.8 13.8H1.2Q0.2 13.8 0.2 12.8V1.2Q0.2 0.2 1.2 0.2Z" fill="#f9d976"/><path d="M9 13.8V10.3Q9 9.5 9.8 9.5H11.8V12.8Q11.8 13.8 10.8 13.8Z" fill="#fdf0c0"/></svg><span class="bm" id="bm8" style="transform:scaleX(0.9439);left:621.6px">202002</span></div><div id="chline"></div><div id="page"><svg class="abs" style="left:0;top:0" width="450" height="296"><use href="#kue" width="450" height="296"/></svg>
<svg class="abs" style="left:450px;top:0" width="450" height="296"><use href="#kue" width="450" height="296"/></svg>
<svg class="abs" style="left:0;top:296px" width="450" height="296"><use href="#kue" width="450" height="296"/></svg>
<svg class="abs" style="left:450px;top:296px" width="450" height="296"><use href="#kue" width="450" height="296"/></svg>
<div id="cont"></div>
<div class="abs" style="left:103px;top:38px;width:10px;height:64px;background:#ffa30f"></div>
<h1 class="abs pf" id="h1" style="transform:scaleX(0.9339);margin:0;left:119.6px;top:44.8px;font-size:32.1px;line-height:48px;font-weight:bold;color:#ffa30f;-webkit-text-stroke:.45px #fff;white-space:nowrap;transform-origin:0 50%">My Twitter</h1>
<a class="abs" id="logout" style="left:554px;top:121px;width:71px;height:30px;border-radius:15px;background:#6cc90d;color:#fff;font-size:13.2px;font-weight:500;line-height:30px;text-align:center;white-space:nowrap;font-family:'Liberation Sans','Noto Sans CJK JP',sans-serif">ログアウト</a>
<div class="abs" id="ta" style="left:79px;top:148px;width:429px;height:41px;border:1px solid #a6a6a6;border-radius:3px;background:#fff"><svg class="abs" style="right:1px;bottom:1px" width="9" height="9" viewBox="0 0 9 9"><path d="M8.5 1L1 8.5M8.5 5L5 8.5" stroke="#8a8a8a" stroke-width="1"/></svg></div>
<div class="abs" id="btn" style="left:513px;top:156px;width:126px;height:42px;border:1px solid #a5a5a5;border-radius:2px;background:linear-gradient(#fafafa,#f0f0f0 50%,#e4e4e4)">
<span class="abs" id="btnt" style="left:7.2px;top:20px;font-size:13.45px;line-height:16px;color:#000;white-space:nowrap;font-family:'Liberation Sans','Noto Sans CJK JP',sans-serif">ツイートする</span>
<svg class="abs" style="left:87.6px;top:3.4px" width="27" height="27" viewBox="0 0 27 27"><rect x=".3" y=".5" width="26.4" height="26" rx="3" fill="#e9793b"/><path d="M11.2 4.6h4.8v6.6h6.6v4.8h-6.6v6.6h-4.8v-6.6h-6.6v-4.8h6.6z" fill="#ffdcb8" stroke="#ffdcb8" stroke-width="1.2" stroke-linejoin="round"/></svg>
</div>
<!-- tweet 1 -->
<div class="abs av" style="left:111px;top:230px;width:66px;height:46px"><svg width="60" height="40" style="display:block;filter:brightness(.86) contrast(1.08)"><use href="#kue" width="60" height="40"/></svg></div>
<span class="abs pf nm" id="n1" style="transform:scaleX(1.0522);left:181.3px;top:262.5px">que</span>
<span class="abs pf tx" id="t1" style="transform:scaleX(0.9729);left:111px;top:291px">test</span>
<span class="abs lk" id="l1" style="left:372px;top:328px">いいね</span>
<svg class="abs" style="left:412.6px;top:323.6px" width="16" height="16"><use href="#heart" width="16" height="16"/></svg>
<span class="abs pf ct" id="c1" style="transform:scaleX(0.9378);left:435px;top:328px">50</span>
<span class="abs pf dt" id="d1" style="transform:scaleX(1.0463);left:479px;top:328px">2020-02-17 15:51:18</span>
<div class="abs dot" style="top:347px"></div>
<!-- tweet 2 -->
<div class="abs av" style="left:111px;top:380.7px;width:66px;height:69.4px"><svg width="60" height="63.4" style="display:block"><use href="#shep" width="60" height="63.4"/></svg></div>
<span class="abs pf nm" id="n2" style="transform:scaleX(0.9789);left:181.3px;top:437.5px">test</span>
<span class="abs pf tx" id="t2" style="transform:scaleX(0.9729);left:111.2px;top:465.1px">test</span>
<span class="abs lk" id="l2" style="left:380.4px;top:501.7px">いいね</span>
<svg class="abs" style="left:420.4px;top:497.5px" width="16" height="16"><use href="#heart" width="16" height="16"/></svg>
<span class="abs pf ct" id="c2" style="left:442.8px;top:501.7px">0</span>
<span class="abs pf dt" id="d2" style="transform:scaleX(1.0463);left:479px;top:501.7px">2020-02-17 15:46:20</span>
<div class="abs dot" style="top:521px"></div>
<!-- tweet 3 -->
<div class="abs av" style="left:111px;top:554.8px;width:66px;height:69.4px"><svg width="60" height="63.4" style="display:block"><use href="#shep" width="60" height="63.4"/></svg></div>
</div></div></body></html>
